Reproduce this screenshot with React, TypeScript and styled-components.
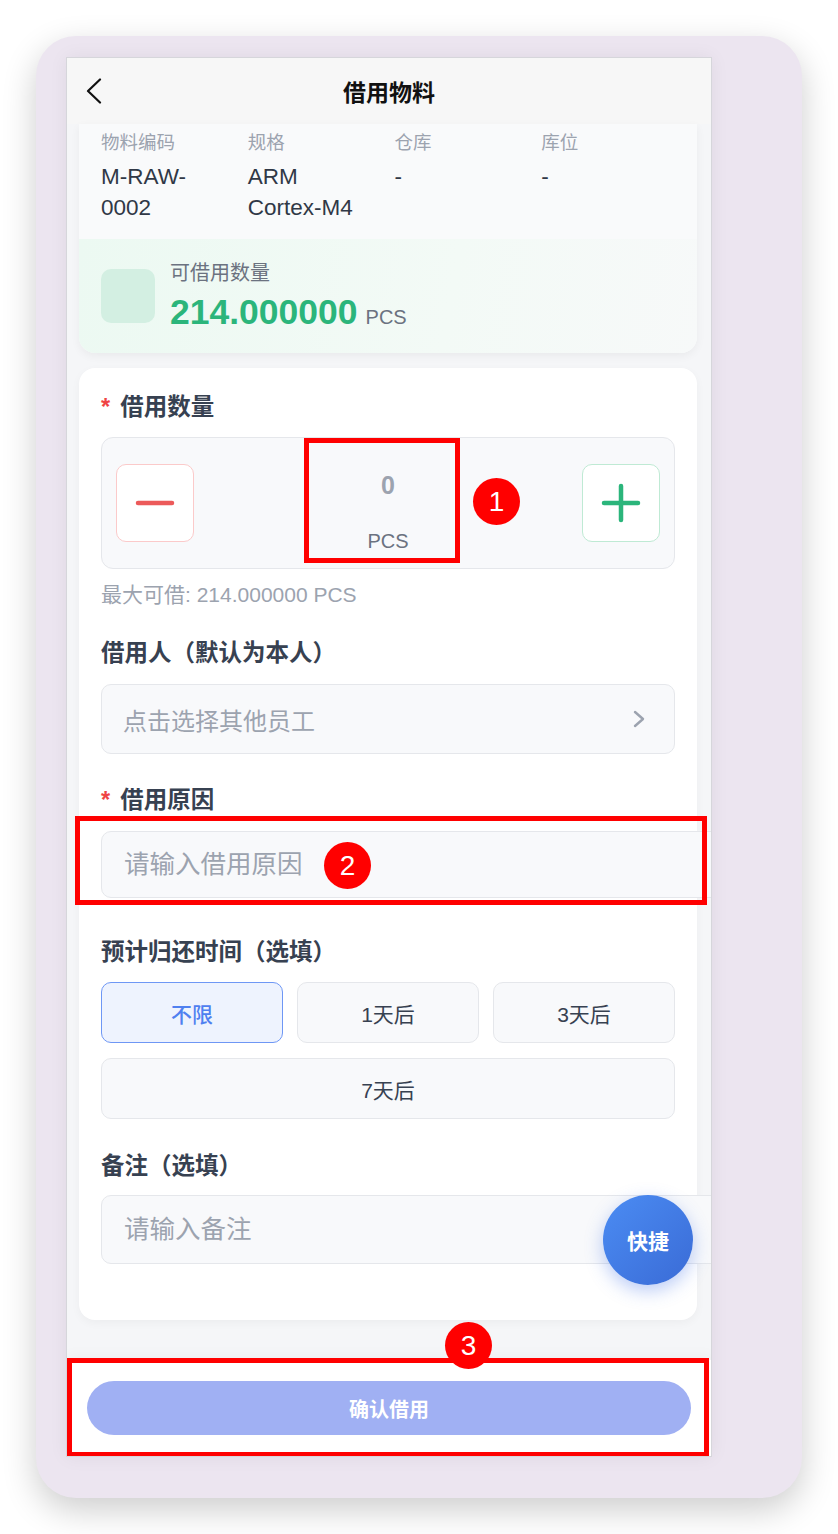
import React from "react";
import styled, { createGlobalStyle } from "styled-components";

const GlobalStyle = createGlobalStyle`
  html, body {
    margin: 0;
    padding: 0;
    background: #ffffff;
  }
  body {
    font-family: "Liberation Sans", "Noto Sans CJK SC", sans-serif;
  }
  * {
    box-sizing: border-box;
  }
`;

const Page = styled.div`
  height: 1534px;
  padding: 36px 0 36px 36px;
`;

const Frame = styled.div`
  width: 766px;
  height: 1462px;
  padding: 21px 90px 41px 30px;
  background: #ece5f0;
  border-radius: 40px;
  box-shadow: 0 12px 34px rgba(0, 0, 0, 0.2);
`;

const Screen = styled.div`
  position: relative;
  height: 1400px;
  border: 1px solid #d6d6db;
  background: #f5f6f8;
  display: flex;
  flex-direction: column;
  overflow: hidden;
  box-shadow: 0 0 18px rgba(0, 0, 0, 0.06);
`;

const Header = styled.header`
  flex-shrink: 0;
  height: 66px;
  display: grid;
  grid-template-columns: 60px 1fr 60px;
  align-items: center;
  background: #f7f7f7;
`;

const BackButton = styled.div`
  display: flex;
  align-items: center;
  padding-left: 19px;
`;

const Title = styled.h1`
  margin: 0;
  text-align: center;
  font-size: 23px;
  font-weight: 700;
  color: #111111;
`;

const Body = styled.main`
  flex: 1;
  padding: 0 14px 0 12px;
  display: flex;
  flex-direction: column;
  gap: 15px;
`;

const InfoCard = styled.section`
  background: #f9fafb;
  border-radius: 0 0 16px 16px;
  box-shadow: 0 3px 10px rgba(0, 0, 0, 0.05);
  overflow: hidden;
`;

const InfoGrid = styled.div`
  display: grid;
  grid-template-columns: repeat(4, 1fr);
  column-gap: 13px;
  padding: 7px 22px 16px;
`;

const InfoLabel = styled.div`
  font-size: 18.5px;
  line-height: 24px;
  color: #9ca3af;
`;

const InfoValue = styled.div`
  margin-top: 6px;
  font-size: 22.5px;
  line-height: 31px;
  color: #303846;
`;

const StockRow = styled.div`
  height: 114px;
  padding: 0 22px;
  display: flex;
  align-items: center;
  gap: 15px;
  background: linear-gradient(100deg, #ecf9f2 0%, #f3faf6 60%, #f7f9f9 100%);
`;

const StockIcon = styled.div`
  width: 54px;
  height: 54px;
  border-radius: 10px;
  background: #d3efe2;
`;

const StockText = styled.div`
  display: flex;
  flex-direction: column;
`;

const StockLabel = styled.div`
  font-size: 20px;
  line-height: 26px;
  color: #6b7280;
`;

const StockAmount = styled.div`
  margin-top: 6px;
  display: flex;
  align-items: baseline;
  gap: 8px;
`;

const StockNumber = styled.span`
  font-size: 35.5px;
  line-height: 40px;
  font-weight: 700;
  color: #2bb57b;
`;

const StockUnit = styled.span`
  font-size: 20px;
  color: #6b7280;
`;

const FormCard = styled.section`
  background: #ffffff;
  border-radius: 16px;
  box-shadow: 0 3px 10px rgba(0, 0, 0, 0.04);
  padding: 24px 22px 56px;
  display: flex;
  flex-direction: column;
`;

const FieldLabel = styled.div<{ $gap?: number }>`
  margin-top: ${(p) => p.$gap ?? 0}px;
  font-size: 23.5px;
  line-height: 30px;
  font-weight: 600;
  color: #374151;
`;

const Required = styled.span`
  color: #ef4444;
  margin-right: 10px;
`;

const Stepper = styled.div`
  margin-top: 15px;
  height: 132px;
  padding: 0 14px;
  display: flex;
  align-items: center;
  justify-content: space-between;
  background: #f8f9fb;
  border: 1.5px solid #e5e7eb;
  border-radius: 12px;
`;

const StepButton = styled.div<{ $border: string }>`
  width: 78px;
  height: 78px;
  display: flex;
  align-items: center;
  justify-content: center;
  background: #ffffff;
  border: 1.5px solid ${(p) => p.$border};
  border-radius: 10px;
`;

const StepValue = styled.div`
  padding-top: 15px;
  display: flex;
  flex-direction: column;
  align-items: center;
  gap: 25px;
`;

const StepNumber = styled.div`
  font-size: 25px;
  line-height: 36px;
  font-weight: 600;
  color: #9ca3af;
`;

const StepUnit = styled.div`
  font-size: 20px;
  line-height: 26px;
  color: #6b7280;
`;

const Hint = styled.div`
  margin-top: 13px;
  font-size: 21px;
  line-height: 26px;
  color: #9ca3af;
`;

const Select = styled.div`
  margin-top: 16px;
  height: 70px;
  padding: 0 28px 0 21px;
  display: flex;
  align-items: center;
  justify-content: space-between;
  background: #f8f9fb;
  border: 1.5px solid #e5e7eb;
  border-radius: 10px;
`;

const Placeholder = styled.span`
  font-size: 24px;
  color: #9ca3af;
`;

const TextInput = styled.input<{ $gap: number; $height: number }>`
  box-sizing: content-box;
  display: block;
  width: 100%;
  height: ${(p) => p.$height}px;
  margin: ${(p) => p.$gap}px 0 0;
  padding: 0 22px;
  background: #f8f9fb;
  border: 1.5px solid #e5e7eb;
  border-radius: 10px;
  font-family: inherit;
  font-size: 25.5px;
  color: #374151;
  outline: none;

  &::placeholder {
    color: #9ca3af;
  }
`;

const Options = styled.div`
  margin-top: 15px;
  display: grid;
  grid-template-columns: repeat(3, 1fr);
  column-gap: 14px;
  row-gap: 15px;
`;

const Option = styled.div<{ $active?: boolean; $wide?: boolean }>`
  grid-column: ${(p) => (p.$wide ? "1 / -1" : "auto")};
  height: 61px;
  display: flex;
  align-items: center;
  justify-content: center;
  font-size: 21px;
  font-weight: ${(p) => (p.$active ? 500 : 400)};
  color: ${(p) => (p.$active ? "#4f80f0" : "#374151")};
  background: ${(p) => (p.$active ? "#eef3fe" : "#f8f9fb")};
  border: 1.5px solid ${(p) => (p.$active ? "#6e97f5" : "#e5e7eb")};
  border-radius: 10px;
`;

const Footer = styled.footer`
  flex-shrink: 0;
  height: 96px;
  padding: 0 20px;
  display: flex;
  align-items: center;
  background: #ffffff;
  box-shadow: 0 -4px 14px rgba(0, 0, 0, 0.04);
`;

const SubmitButton = styled.div`
  flex: 1;
  height: 54px;
  border-radius: 27px;
  display: flex;
  align-items: center;
  justify-content: center;
  background: #a0b0f3;
  color: #ffffff;
  font-size: 20px;
  font-weight: 600;
`;

const QuickButton = styled.div`
  position: absolute;
  left: 536px;
  top: 1137px;
  width: 90px;
  height: 90px;
  border-radius: 50%;
  display: flex;
  align-items: center;
  justify-content: center;
  background: linear-gradient(135deg, #4b8cf3 0%, #3a6bd6 100%);
  box-shadow: 0 6px 18px rgba(59, 110, 230, 0.35);
  color: #ffffff;
  font-size: 21px;
  font-weight: 700;
`;

const Highlight = styled.div<{ $x: number; $y: number; $w: number; $h: number }>`
  position: absolute;
  left: ${(p) => p.$x}px;
  top: ${(p) => p.$y}px;
  width: ${(p) => p.$w}px;
  height: ${(p) => p.$h}px;
  border: 5px solid #ff0000;
  pointer-events: none;
`;

const Badge = styled.div<{ $x: number; $y: number }>`
  position: absolute;
  left: ${(p) => p.$x}px;
  top: ${(p) => p.$y}px;
  width: 47px;
  height: 47px;
  border-radius: 50%;
  background: #ff0000;
  color: #ffffff;
  display: flex;
  align-items: center;
  justify-content: center;
  font-size: 28px;
  font-weight: 500;
`;

const infoItems = [
  { label: "物料编码", lines: ["M-RAW-", "0002"] },
  { label: "规格", lines: ["ARM", "Cortex-M4"] },
  { label: "仓库", lines: ["-"] },
  { label: "库位", lines: ["-"] },
];

const returnOptions = ["不限", "1天后", "3天后", "7天后"];

export default function App(): JSX.Element {
  return (
    <>
      <GlobalStyle />
      <Page>
        <Frame>
          <Screen>
            <Header>
              <BackButton>
                <svg width="16" height="26" viewBox="0 0 16 26">
                  <polyline
                    points="14,1.5 2,13 14,24.5"
                    fill="none"
                    stroke="#111"
                    strokeWidth="2.2"
                    strokeLinecap="round"
                    strokeLinejoin="round"
                  />
                </svg>
              </BackButton>
              <Title>借用物料</Title>
              <div />
            </Header>

            <Body>
              <InfoCard>
                <InfoGrid>
                  {infoItems.map((item) => (
                    <div key={item.label}>
                      <InfoLabel>{item.label}</InfoLabel>
                      <InfoValue>
                        {item.lines.map((line) => (
                          <div key={line}>{line}</div>
                        ))}
                      </InfoValue>
                    </div>
                  ))}
                </InfoGrid>
                <StockRow>
                  <StockIcon />
                  <StockText>
                    <StockLabel>可借用数量</StockLabel>
                    <StockAmount>
                      <StockNumber>214.000000</StockNumber>
                      <StockUnit>PCS</StockUnit>
                    </StockAmount>
                  </StockText>
                </StockRow>
              </InfoCard>

              <FormCard>
                <FieldLabel>
                  <Required>*</Required>借用数量
                </FieldLabel>
                <Stepper>
                  <StepButton $border="#fbcaca">
                    <svg width="40" height="8" viewBox="0 0 40 8">
                      <line x1="3" y1="4" x2="37" y2="4" stroke="#ec5a5a" strokeWidth="4.5" strokeLinecap="round" />
                    </svg>
                  </StepButton>
                  <StepValue>
                    <StepNumber>0</StepNumber>
                    <StepUnit>PCS</StepUnit>
                  </StepValue>
                  <StepButton $border="#bfead4">
                    <svg width="40" height="40" viewBox="0 0 40 40">
                      <line x1="3" y1="20" x2="37" y2="20" stroke="#2bb57b" strokeWidth="4.5" strokeLinecap="round" />
                      <line x1="20" y1="3" x2="20" y2="37" stroke="#2bb57b" strokeWidth="4.5" strokeLinecap="round" />
                    </svg>
                  </StepButton>
                </Stepper>
                <Hint>最大可借: 214.000000 PCS</Hint>

                <FieldLabel $gap={30}>借用人（默认为本人）</FieldLabel>
                <Select>
                  <Placeholder>点击选择其他员工</Placeholder>
                  <svg width="14" height="18" viewBox="0 0 14 18">
                    <polyline
                      points="3,2 11,9 3,16"
                      fill="none"
                      stroke="#9ca3af"
                      strokeWidth="2.4"
                      strokeLinecap="round"
                      strokeLinejoin="round"
                    />
                  </svg>
                </Select>

                <FieldLabel $gap={31}>
                  <Required>*</Required>借用原因
                </FieldLabel>
                <TextInput $gap={16} $height={65} placeholder="请输入借用原因" readOnly />

                <FieldLabel $gap={39}>预计归还时间（选填）</FieldLabel>
                <Options>
                  {returnOptions.map((opt, i) => (
                    <Option key={opt} $active={i === 0} $wide={i === 3}>
                      {opt}
                    </Option>
                  ))}
                </Options>

                <FieldLabel $gap={32}>备注（选填）</FieldLabel>
                <TextInput $gap={14} $height={67} placeholder="请输入备注" readOnly />
              </FormCard>
            </Body>

            <Footer>
              <SubmitButton>确认借用</SubmitButton>
            </Footer>

            <QuickButton>快捷</QuickButton>

            <Highlight $x={237} $y={380} $w={156} $h={125} />
            <Badge $x={406} $y={420}>1</Badge>
            <Highlight $x={8} $y={758} $w={632} $h={89} />
            <Badge $x={257} $y={784}>2</Badge>
            <Highlight $x={0} $y={1300} $w={642} $h={99} />
            <Badge $x={378} $y={1264}>3</Badge>
          </Screen>
        </Frame>
      </Page>
    </>
  );
}
